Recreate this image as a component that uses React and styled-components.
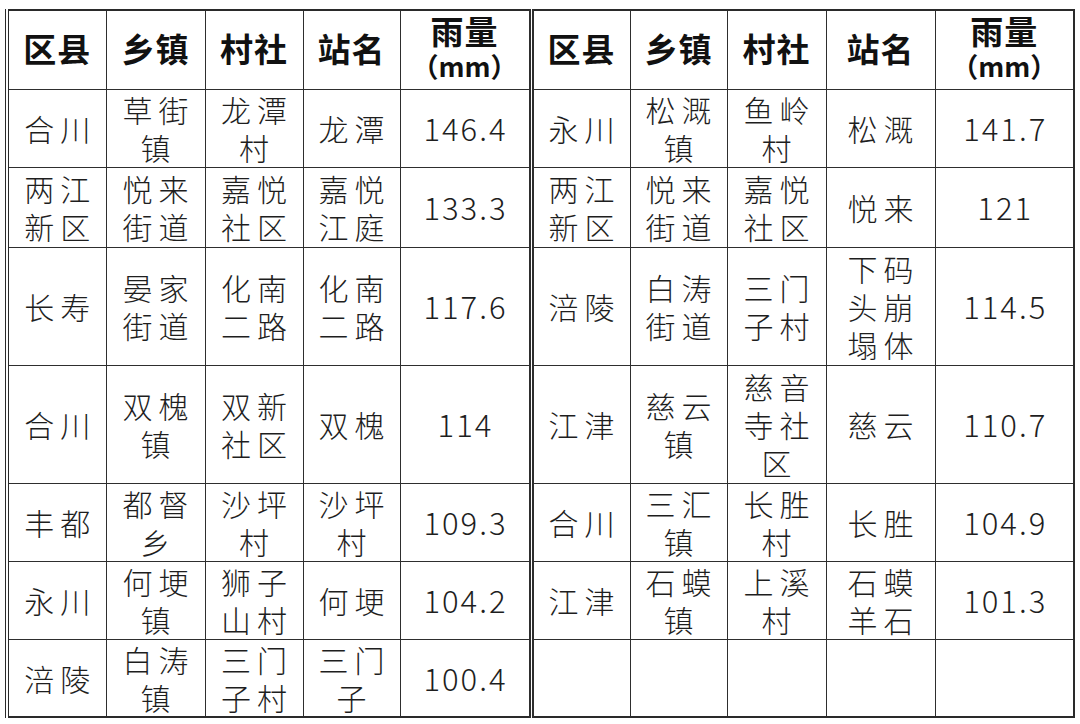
import React from 'react';
import styled, { createGlobalStyle } from 'styled-components';

const GlobalStyle = createGlobalStyle`
  html, body {
    margin: 0;
    padding: 0;
    background: #ffffff;
  }
  body {
    padding: 9px 0 0 5px;
    font-family: "Noto Sans CJK SC", "Noto Sans", sans-serif;
  }
`;

const Table = styled.table`
  width: 1068px;
  border-collapse: collapse;
  table-layout: fixed;
  color: #1e1e1e;
  border-top: 2px solid #2a2a2a;
  border-right: 2px solid #2a2a2a;
  border-bottom: 2px solid #2a2a2a;
  border-left: 4px double #2a2a2a;
`;

const Row = styled.tr`
  height: ${(p) => p.$h}px;
`;

const Cell = styled.td`
  border: 1.5px solid #2e2e2e;
  border-right: ${(p) => (p.$split ? '5px double #2e2e2e' : '1.5px solid #2e2e2e')};
  text-align: center;
  vertical-align: middle;
  padding: 0;
  font-size: ${(p) => (p.$num ? 31 : 30)}px;
  font-weight: 300;
  line-height: 38px;
  letter-spacing: ${(p) => (p.$num ? 2 : 6)}px;
  text-indent: ${(p) => (p.$num ? 2 : 6)}px;
`;

const HeadCell = styled.th`
  border: 1.5px solid #2e2e2e;
  border-right: ${(p) => (p.$split ? '5px double #2e2e2e' : '1.5px solid #2e2e2e')};
  text-align: center;
  vertical-align: middle;
  padding: 0 0 4px;
  font-size: 33px;
  font-weight: 700;
  line-height: 36px;
  letter-spacing: 1px;
  color: #111;
`;

const Line = styled.span`
  display: block;
`;

const Unit = styled.span`
  display: block;
  font-size: 27px;
  font-weight: 700;
  letter-spacing: 0;
`;

const widths = [99, 99, 98, 97, 131, 99, 97, 99, 109, 139];
const heights = [78, 80, 118, 118, 78, 78, 78];

const left = [
  ['合川', '草街镇', '龙潭村', '龙潭', '146.4'],
  ['两江新区', '悦来街道', '嘉悦社区', '嘉悦江庭', '133.3'],
  ['长寿', '晏家街道', '化南二路', '化南二路', '117.6'],
  ['合川', '双槐镇', '双新社区', '双槐', '114'],
  ['丰都', '都督乡', '沙坪村', '沙坪村', '109.3'],
  ['永川', '何埂镇', '狮子山村', '何埂', '104.2'],
  ['涪陵', '白涛镇', '三门子村', '三门子', '100.4'],
];

const right = [
  ['永川', '松溉镇', '鱼岭村', '松溉', '141.7'],
  ['两江新区', '悦来街道', '嘉悦社区', '悦来', '121'],
  ['涪陵', '白涛街道', '三门子村', '下码头崩塌体', '114.5'],
  ['江津', '慈云镇', '慈音寺社区', '慈云', '110.7'],
  ['合川', '三汇镇', '长胜村', '长胜', '104.9'],
  ['江津', '石蟆镇', '上溪村', '石蟆羊石', '101.3'],
  ['', '', '', '', ''],
];

const chunk = (text) => {
  const out = [];
  for (let i = 0; i < text.length; i += 2) out.push(text.slice(i, i + 2));
  return out;
};

const Header = () => {
  const half = (side) => [
    <HeadCell key={`${side}a`}>区县</HeadCell>,
    <HeadCell key={`${side}b`}>乡镇</HeadCell>,
    <HeadCell key={`${side}c`}>村社</HeadCell>,
    <HeadCell key={`${side}d`}>站名</HeadCell>,
    <HeadCell key={`${side}e`} $split={side === 'l'}>
      <Line>雨量</Line>
      <Unit>（mm）</Unit>
    </HeadCell>,
  ];
  return (
    <Row $h={79}>
      {half('l')}
      {half('r')}
    </Row>
  );
};

const DataCells = ({ data, split }) =>
  data.map((text, i) => {
    if (i === 4) {
      return (
        <Cell key={i} $num $split={split}>
          {text}
        </Cell>
      );
    }
    return (
      <Cell key={i}>
        {chunk(text).map((part) => (
          <Line key={part}>{part}</Line>
        ))}
      </Cell>
    );
  });

export default function App() {
  return (
    <>
      <GlobalStyle />
      <Table>
        <colgroup>
          {widths.map((w, i) => (
            <col key={i} style={{ width: w }} />
          ))}
        </colgroup>
        <tbody>
          <Header />
          {heights.map((h, i) => (
            <Row key={i} $h={h}>
              <DataCells data={left[i]} split />
              <DataCells data={right[i]} />
            </Row>
          ))}
        </tbody>
      </Table>
    </>
  );
}
